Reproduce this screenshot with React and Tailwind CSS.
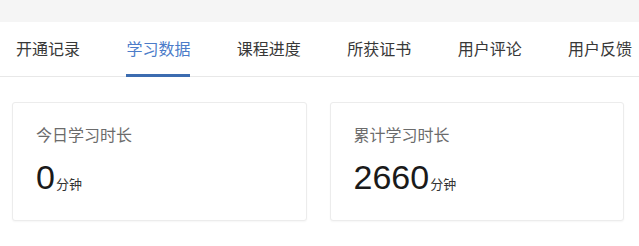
import React from "react";

const tabs = ["开通记录", "学习数据", "课程进度", "所获证书", "用户评论", "用户反馈"];

function Card({ title, value }) {
  return (
    <div className="h-[119px] rounded-[3px] border border-[#ececec] bg-white pl-[23px] pt-[21px] shadow-[0_1px_2px_rgba(0,0,0,0.04)]">
      <div className="text-[16px] leading-6 text-[#6b6b6b]">{title}</div>
      <div className="mt-[12px] flex items-baseline leading-[34px]">
        <span className="text-[34px] text-[#1a1a1a]">{value}</span>
        <span className="ml-[1px] text-[13px] text-[#333333]">分钟</span>
      </div>
    </div>
  );
}

export default function App() {
  return (
    <div
      className="h-[246px] w-[639px] overflow-hidden bg-white"
      style={{ fontFamily: '"Liberation Sans", "Noto Sans CJK SC", sans-serif' }}
    >
      <div className="h-[22px] bg-[#f5f5f5]" />
      <div className="flex h-[55px] items-stretch gap-[46.4px] border-b border-[#e8e8e8] pl-[16px]">
        {tabs.map((t, i) => (
          <div key={t} className="relative flex items-center pt-[2px]">
            <span
              className={
                "whitespace-nowrap text-[16px] leading-6 " +
                (i === 1 ? "text-[#4c7cc9]" : "text-[#383838]")
              }
            >
              {t}
            </span>
            {i === 1 && (
              <span className="absolute bottom-[-1px] left-0 right-0 h-[3px] bg-[#3c6cb0]" />
            )}
          </div>
        ))}
      </div>
      <div className="grid grid-cols-2 gap-[23px] pl-[12px] pr-[15px] pt-[25px]">
        <Card title="今日学习时长" value="0" />
        <Card title="累计学习时长" value="2660" />
      </div>
    </div>
  );
}
